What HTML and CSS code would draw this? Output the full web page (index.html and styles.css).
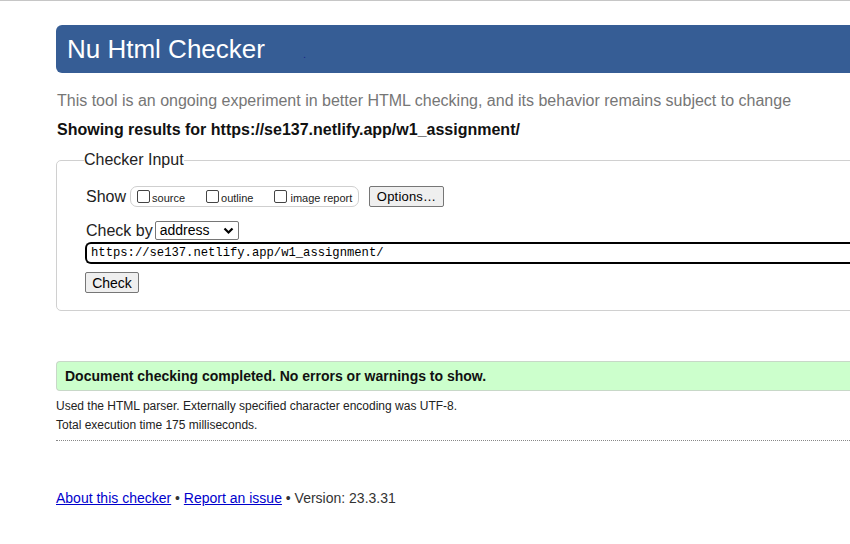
FILE: index.html
```html
<!DOCTYPE html>
<html>
<head>
<meta charset="utf-8">
<link rel="stylesheet" href="styles.css">
</head>
<body>
<div class="page">
  <h1 class="title"><span>Nu Html Checker</span><a class="dot" href="#">.</a></h1>
  <p class="intro">This tool is an ongoing experiment in better HTML checking, and its behavior remains subject to change</p>
  <p class="showing">Showing results for https://se137.netlify.app/w1_assignment/</p>
  <fieldset class="input-box">
    <legend class="input-legend">Checker Input</legend>
    <div class="row row-show">
      <span class="label">Show</span>
      <span class="opts">
        <label class="opt"><span class="cb"></span>source</label>
        <label class="opt"><span class="cb"></span>outline</label>
        <label class="opt"><span class="cb"></span>image report</label>
      </span>
      <button class="btn btn-options">Options…</button>
    </div>
    <div class="row row-by">
      <span class="label">Check by</span>
      <span class="select">address<svg class="chev" width="11" height="8" viewBox="0 0 11 8"><path d="M1.5 1.5 L5.5 5.5 L9.5 1.5" fill="none" stroke="#000" stroke-width="2.2"/></svg></span>
    </div>
    <div class="url">https://se137.netlify.app/w1_assignment/</div>
    <div class="row-check"><button class="btn btn-check">Check</button></div>
  </fieldset>
  <p class="success">Document checking completed. No errors or warnings to show.</p>
  <p class="meta">Used the HTML parser. Externally specified character encoding was UTF-8.</p>
  <p class="meta">Total execution time 175 milliseconds.</p>
  <hr class="sep">
  <p class="footer"><a href="#">About this checker</a> • <a href="#">Report an issue</a> • Version: 23.3.31</p>
</div>
</body>
</html>
```

FILE: styles.css
```css
html, body {
  margin: 0;
  padding: 0;
  overflow: hidden;
  background: #fff;
}
body {
  border-top: 1px solid #c6c6c6;
  font-family: "Liberation Sans", Arial, sans-serif;
  color: #000;
}
.page {
  width: 1000px;
  padding: 24px 0 0 56px;
}
.title {
  margin: 0;
  height: 48px;
  background: #365d95;
  border-radius: 6px 0 0 6px;
  color: #fff;
  font-weight: normal;
  font-size: 26px;
  line-height: 48px;
  padding-left: 11px;
  display: flex;
  align-items: baseline;
}
.dot {
  color: #1a2a8a;
  font-size: 11px;
  margin-left: 38px;
  text-decoration: none;
}
.intro {
  margin: 0;
  padding-top: 18px;
  font-size: 16px;
  line-height: 19px;
  color: #767676;
  padding-left: 1px;
}
.showing {
  margin: 0;
  padding-top: 10px;
  font-size: 16px;
  line-height: 19px;
  font-weight: bold;
  color: #111;
  padding-left: 1px;
}
.input-box {
  margin: 12px 0 0 0;
  border: 1px solid #d0d0d0;
  border-radius: 5px;
  padding: 17px 0 17px 28px;
  height: 124px;
  box-sizing: content-box;
}
.input-legend {
  padding: 0;
  margin-left: -1px;
  font-size: 16px;
  color: #222;
  line-height: 18px;
}
.row {
  display: flex;
  align-items: center;
  margin-left: 1px;
}
.label {
  font-size: 16px;
  color: #222;
}
.opts {
  flex-shrink: 0;
  margin-left: 4px;
  height: 19px;
  width: 221px;
  border: 1px solid #cfcfcf;
  border-radius: 7px;
  display: flex;
  align-items: center;
  padding-left: 6px;
  box-sizing: content-box;
}
.opt {
  display: flex;
  align-items: center;
  font-size: 11px;
  color: #222;
  margin-right: 21px;
  position: relative;
  top: 1px;
  white-space: nowrap;
}
.opt:last-child { margin-right: 0; }
.opt:nth-child(3) { margin-left: 0; }
.cb {
  width: 11px;
  height: 11px;
  border: 1px solid #444;
  border-radius: 2px;
  margin-right: 2px;
  position: relative;
  top: -1px;
}
.opt:nth-child(3) .cb { margin-right: 3px; }
.btn {
  font-family: "Liberation Sans", Arial, sans-serif;
  font-size: 13px;
  background: #efefef;
  border: 1px solid #767676;
  border-radius: 2px;
  color: #000;
  padding: 0;
  height: 21px;
}
.btn-options {
  margin-left: 10px;
  width: 75px;
  letter-spacing: 0.2px;
}
.row-by {
  margin-top: 14px;
}
.select {
  margin-left: 2px;
  width: 84px;
  height: 19px;
  box-sizing: border-box;
  border: 1px solid #767676;
  border-radius: 2px;
  font-size: 14px;
  line-height: 17px;
  padding-left: 4px;
  display: flex;
  align-items: center;
  justify-content: space-between;
  padding-right: 4px;
}
.chev { display: block; }
.url {
  margin-top: 2px;
  height: 22px;
  box-sizing: border-box;
  border: 2px solid #000;
  border-right: none;
  border-radius: 6px 0 0 6px;
  font-family: "Liberation Mono", "Courier New", monospace;
  font-size: 12.2px;
  line-height: 18px;
  padding-left: 4px;
}
.row-check {
  margin-top: 8px;
}
.btn-check {
  width: 54px;
  font-size: 14px;
}
.success {
  margin: 50px 0 0 0;
  height: 30px;
  box-sizing: border-box;
  background: #ccffcc;
  border: 1px solid #c8d8c8;
  border-right: none;
  border-radius: 4px 0 0 4px;
  font-weight: bold;
  font-size: 14px;
  line-height: 28px;
  padding-left: 8px;
  color: #111;
}
.meta {
  margin: 0;
  font-size: 12px;
  line-height: 19px;
  color: #222;
}
.success + .meta { margin-top: 6px; }
.sep {
  margin: 5px 0 0 0;
  border: none;
  border-top: 1px dotted #888;
  height: 0;
}
.footer {
  margin: 49px 0 0 0;
  font-size: 14px;
  line-height: 17px;
  color: #333;
}
.footer a {
  color: #0000cc;
}
```
